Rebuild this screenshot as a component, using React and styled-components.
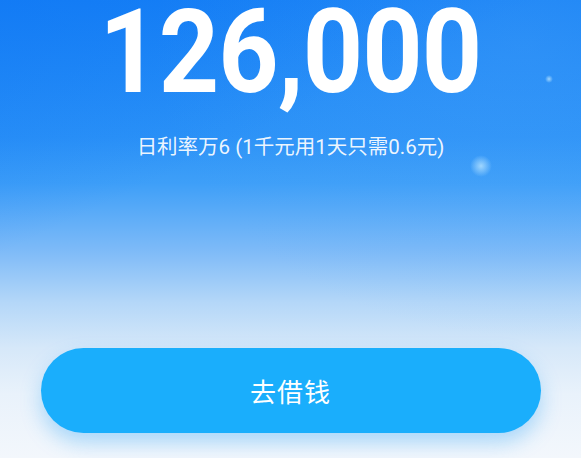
import React from "react";
import styled, { createGlobalStyle } from "styled-components";

const Global = createGlobalStyle`
  html, body { margin: 0; padding: 0; }
  body { font-family: Roboto, "Noto Sans CJK SC", sans-serif; }
`;

const Page = styled.div`
  position: relative;
  width: 581px;
  height: 458px;
  overflow: hidden;
  display: flex;
  flex-direction: column;
  align-items: center;
  background: linear-gradient(
    180deg,
    #1782f5 0%,
    #2b92f7 30%,
    #3e9ff8 40%,
    #7fbbf8 55%,
    #b4d7f8 66%,
    #d6e8f9 76%,
    #e9f2fb 86%,
    #f3f7fc 100%
  );
`;

const Sheen = styled.div`
  position: absolute;
  inset: 0;
  background: linear-gradient(155deg, rgba(10, 110, 245, 0.35) 0%, rgba(10, 110, 245, 0) 35%),
    radial-gradient(ellipse at 90% 10%, rgba(90, 170, 250, 0.25), rgba(90, 170, 250, 0) 50%);
  pointer-events: none;
`;

const Sparkle = styled.div`
  position: absolute;
  border-radius: 50%;
  pointer-events: none;
  background: radial-gradient(circle, rgba(170, 220, 255, 0.9) 0%, rgba(170, 220, 255, 0) 70%);
`;

const Amount = styled.div`
  position: relative;
  margin-top: 2px;
  font-family: Roboto, sans-serif;
  font-weight: 700;
  font-size: 117px;
  line-height: 100px;
  color: #ffffff;
  letter-spacing: -1px;
  transform: scaleX(0.9);
  transform-origin: center;
`;

const Rate = styled.div`
  position: relative;
  margin-top: 32px;
  font-family: Roboto, "Noto Sans CJK SC", sans-serif;
  font-size: 20.5px;
  line-height: 26px;
  color: rgba(255, 255, 255, 0.92);
`;

const Spacer = styled.div`
  flex: 1;
`;

const BorrowButton = styled.button`
  position: relative;
  width: 500px;
  height: 85px;
  margin-bottom: 25px;
  border: none;
  border-radius: 43px;
  background: #1aaefc;
  color: #ffffff;
  font-family: "Noto Sans CJK SC", sans-serif;
  font-size: 26px;
  letter-spacing: 1px;
  box-shadow: 0 10px 20px rgba(40, 160, 245, 0.35);
  cursor: pointer;
`;

export default function App() {
  return (
    <>
      <Global />
      <Page>
        <Sheen />
        <Sparkle style={{ left: 545, top: 75, width: 8, height: 8 }} />
        <Sparkle style={{ left: 470, top: 155, width: 22, height: 22 }} />
        <Amount>126,000</Amount>
        <Rate>日利率万6 (1千元用1天只需0.6元)</Rate>
        <Spacer />
        <BorrowButton>去借钱</BorrowButton>
      </Page>
    </>
  );
}
